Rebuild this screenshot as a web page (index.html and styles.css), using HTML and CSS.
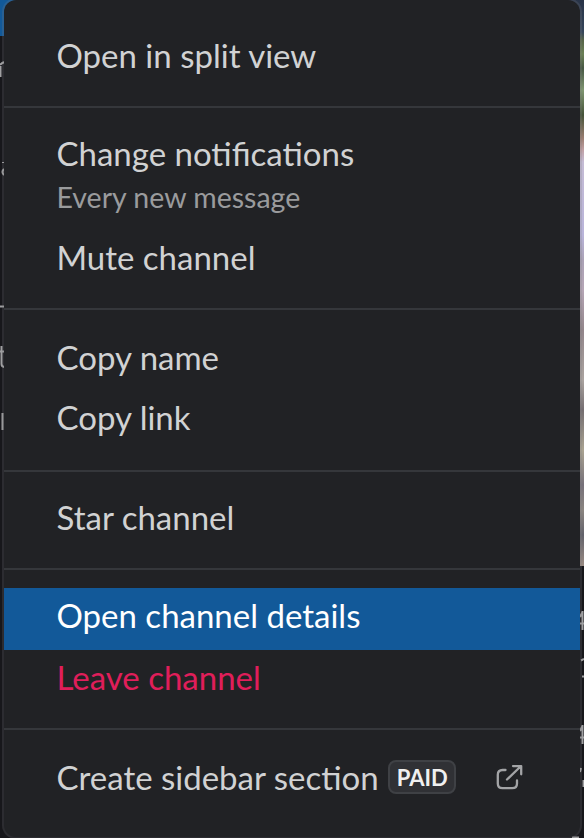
FILE: index.html
```html
<!DOCTYPE html>
<html lang="en">
<head>
<meta charset="utf-8">
<title>Channel menu</title>
<link rel="stylesheet" href="styles.css">
</head>
<body>
<div class="backdrop">
  <div class="selected-row"></div>
  <svg class="fragments" width="584" height="838" viewBox="0 0 584 838" aria-hidden="true">
    <path d="M0 65Q2 62.500 5 62M0.500 66V77M0 306.500H4M1.500 346V364Q1.500 367 5 367M0 351.500H4M2.500 413V430M3 162V163M4 169Q1 172 4 175" class="stroke"/>
    <path d="M582.500 611V630M580 623.500H584M582.500 612L580 617M582.500 725V744M580 737.500H584M582.500 726L580 731M581 660.500L584 659M582 676.500H584M581 768L580 772M583.500 780V787" class="stroke"/>
    <path d="M572 837.500H579" class="stroke"/>
  </svg>
  <div class="photo"></div>
</div>
<nav class="menu">
  <section class="group group-split">
    <div class="item">Open in split view</div>
  </section>
  <section class="group group-notify">
    <div class="item item-tall">Change notifications<span class="hint">Every new message</span></div>
    <div class="item">Mute channel</div>
  </section>
  <section class="group group-copy">
    <div class="item">Copy name</div>
    <div class="item">Copy link</div>
  </section>
  <section class="group group-star">
    <div class="item">Star channel</div>
  </section>
  <section class="group group-details">
    <div class="item active">Open channel details</div>
    <div class="item danger">Leave channel</div>
  </section>
  <section class="group group-section">
    <div class="item">Create sidebar section<span class="badge">PAID</span>
      <svg class="external" width="28" height="28" viewBox="0 0 28 28" aria-hidden="true"><path d="M10.500 7H7.500Q2.800 7 2.800 11.700V20.400Q2.800 25.100 7.500 25.100H17.300Q22 25.100 22 20.400V17.500M12 16.500L25.500 3.500M18 3.100H26.200V11.300"/></svg>
    </div>
  </section>
</nav>
</body>
</html>
```

FILE: styles.css
```css
* { box-sizing: border-box; }
body {
  margin: 0;
  height: 838px;
  overflow: hidden;
  position: relative;
  background: #17171b;
  font-family: Lato, "Liberation Sans", sans-serif;
}
.backdrop { position: absolute; inset: 0; }
.selected-row { position: absolute; left: 0; top: 0; width: 40px; height: 36px; background: #125999; }
.fragments { position: absolute; left: 0; top: 0; }
.stroke { fill: none; stroke: #a0a0a2; stroke-width: 2; }
.photo {
  position: absolute;
  right: 0;
  top: 0;
  width: 30px;
  height: 566px;
  background: linear-gradient(#283347 0, #35455a 32px, #566348 40px, #6b8054 54px, #465743 68px, #7f9670 90px, #455338 115px, #9a7d70 138px, #c0a0a4 150px, #c4bbd4 162px, #b9b4da 235px, #aaa1b5 260px, #b5a5b5 290px, #92858a 330px, #aaa39f 380px, #746d70 410px, #aaa391 450px, #767079 485px, #8b8580 510px, #62616a 535px, #9a8b83 566px);
}
.menu {
  position: relative;
  width: 576px;
  height: 837px;
  margin: 0 4px;
  border-radius: 12px;
  background: #212225;
  box-shadow: 0 0 0 2px rgba(121, 124, 129, .22);
  color: #d1d2d3;
  font-size: 33px;
}
.group { display: flex; flex-direction: column; }
.group + .group { border-top: 2px solid #35373b; }
.group-split { height: 106px; padding-top: 26px; }
.group-notify { height: 202px; padding-top: 16px; }
.group-copy { height: 162px; padding-top: 18px; }
.group-star { height: 98px; padding-top: 16px; }
.group-details { height: 160px; padding-top: 18px; }
.group-section { height: 109px; padding-top: 18px; }
.item {
  display: flex;
  align-items: center;
  flex: none;
  height: 60px;
  padding: 0 0 2px 52.500px;
  line-height: 58px;
  white-space: nowrap;
}
.item-tall { display: block; height: 104px; }
.hint { display: block; margin-top: -3px; font-size: 28.500px; line-height: 36px; color: #9a9b9d; }
.active { height: 62px; padding-bottom: 8px; background: #125999; color: #fff; }
.danger { height: 58px; padding-bottom: 4px; color: #e01e5a; }
.badge {
  width: 68px;
  height: 34px;
  margin-left: 9.500px;
  border: 2px solid #3f4145;
  border-radius: 8px;
  background: #303135;
  color: #f0f0f0;
  font-size: 22px;
  font-weight: 700;
  line-height: 31px;
  text-align: center;
}
.external { margin-left: 38.500px; fill: none; stroke: #a3a4a6; stroke-width: 2.300; stroke-linecap: round; stroke-linejoin: round; }
```
